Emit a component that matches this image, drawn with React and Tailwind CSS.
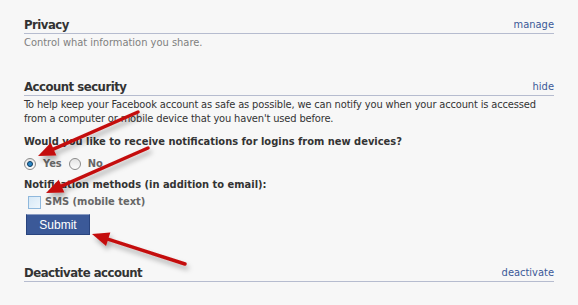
import React from 'react';

const font = "font-['DejaVu_Sans_Condensed','DejaVu_Sans',sans-serif] font-stretch-condensed";

// red arrow with a drawn head, from tail to tip
function Arrow({ x1, y1, x2, y2 }) {
  const dx = x2 - x1;
  const dy = y2 - y1;
  const len = Math.hypot(dx, dy);
  const ux = dx / len;
  const uy = dy / len;
  const headLen = 17;
  const headW = 7;
  const bx = x2 - ux * headLen;
  const by = y2 - uy * headLen;
  const pts = [
    [x2, y2],
    [bx - uy * headW, by + ux * headW],
    [bx + uy * headW, by - ux * headW],
  ]
    .map((p) => p.join(','))
    .join(' ');
  return (
    <g>
      <line x1={x1} y1={y1} x2={bx + ux * 2} y2={by + uy * 2} stroke="#c40e0e" strokeWidth="3.5" strokeLinecap="round" />
      <polygon points={pts} fill="#c40e0e" />
    </g>
  );
}

function SectionHead({ title, link }) {
  return (
    <div className="flex h-[17px] items-end justify-between border-b border-[#b6bccf] leading-4">
      <h3 className="text-[13px] font-bold tracking-[-0.5px] text-[#333]">{title}</h3>
      <a className="text-[11px] text-[#3b5998]" href="#">
        {link}
      </a>
    </div>
  );
}

function Radio({ checked }) {
  return (
    <span className="flex h-3 w-3 items-center justify-center rounded-full border border-[#8a8a8a] bg-gradient-to-b from-[#e4e4e4] to-[#fdfdfd]">
      {checked && <span className="h-[6px] w-[6px] rounded-full border border-[#0e3a5e] bg-[#2b87c7]" />}
    </span>
  );
}

export default function App() {
  return (
    <div className={`relative h-[305px] w-[578px] overflow-hidden bg-[#f7f7f7] ${font}`}>
      <div className="px-6 pt-[17px]">
        <SectionHead title="Privacy" link="manage" />
        <p className="mt-[2px] text-[11px] leading-[14px] text-[#808080]">Control what information you share.</p>

        <div className="mt-[29px]">
          <SectionHead title="Account security" link="hide" />
        </div>
        <p className="mt-[2px] text-[11px] leading-[14px] tracking-[-0.15px] text-[#333]">
          To help keep your Facebook account as safe as possible, we can notify you when your account is accessed
          from a computer or mobile device that you haven't used before.
        </p>
        <p className="mt-[9px] text-[11px] font-bold leading-[14px] text-[#333]">
          Would you like to receive notifications for logins from new devices?
        </p>
        <div className="mt-[8px] flex h-[14px] items-center text-[11px] font-bold text-[#666]">
          <Radio checked />
          <span className="ml-[7px]">Yes</span>
          <span className="ml-[7px]">
            <Radio />
          </span>
          <span className="ml-[7px]">No</span>
        </div>
        <p className="mt-[7px] text-[11px] font-bold leading-[14px] text-[#333]">
          Notification methods (in addition to email):
        </p>
        <div className="mt-[3px] flex h-[14px] items-center pl-1 text-[11px] font-bold text-[#666]">
          <span className="h-[13px] w-[13px] border border-[#8fb8dc] bg-gradient-to-br from-[#d6e8f6] to-[#eef6fc]" />
          <span className="ml-[4px]">SMS (mobile text)</span>
        </div>
        <button className="mt-[5px] ml-[2px] flex h-[21px] w-[64px] items-center justify-center border border-[#29447e] border-t-[#8a9cc2] bg-[#3b5998] font-['Liberation_Sans',sans-serif] text-[12px] text-white">
          Submit
        </button>

        <div className="mt-[30px]">
          <SectionHead title="Deactivate account" link="deactivate" />
        </div>
      </div>

      <svg className="pointer-events-none absolute inset-0" width="578" height="305" viewBox="0 0 578 305">
        <defs>
          <filter id="sh" x="-20%" y="-20%" width="140%" height="140%">
            <feDropShadow dx="2" dy="4" stdDeviation="2.5" floodColor="#000" floodOpacity="0.3" />
          </filter>
        </defs>
        <g filter="url(#sh)">
          <Arrow x1={138} y1={112} x2={38} y2={156} />
          <Arrow x1={148} y1={148} x2={46} y2={193} />
          <Arrow x1={185} y1={264} x2={92} y2={234} />
        </g>
      </svg>
    </div>
  );
}
